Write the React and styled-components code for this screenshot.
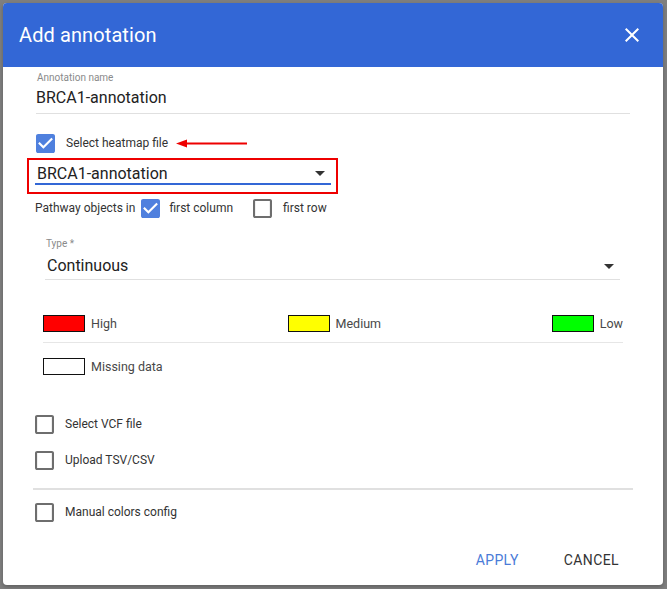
import React from "react";
import styled, { createGlobalStyle } from "styled-components";

const GlobalStyle = createGlobalStyle`
  html, body {
    margin: 0;
    padding: 0;
    background: #808080;
    font-family: Roboto, "Liberation Sans", Arial, sans-serif;
  }
  * { box-sizing: border-box; }
`;

const Page = styled.div`
  width: 667px;
  height: 589px;
  padding: 3px 4px 4px 3px;
  background: #7f7f7f;
`;

const Dialog = styled.div`
  width: 660px;
  height: 582px;
  background: #fff;
  border-radius: 4px;
  overflow: hidden;
  display: flex;
  flex-direction: column;
  box-shadow: 0 2px 4px rgba(0, 0, 0, 0.25);
`;

const Header = styled.div`
  height: 64px;
  flex: none;
  background: #3367d6;
  color: #fff;
  display: flex;
  align-items: center;
  justify-content: space-between;
  padding: 0 19px 0 16px;
`;

const Title = styled.h2`
  margin: 0;
  font-size: 20px;
  font-weight: 400;
  letter-spacing: 0.1px;
`;

const CloseButton = styled.button`
  border: 0;
  background: none;
  padding: 0;
  width: 24px;
  height: 24px;
  color: #fff;
  display: flex;
`;

const Body = styled.div`
  flex: 1;
  display: flex;
  flex-direction: column;
  padding: 0 30px 0 24px;
`;

const Field = styled.div`
  display: flex;
  flex-direction: column;
  margin: ${(p) => p.$margin};
  border-bottom: 1px solid #e0e0e0;
  padding-bottom: ${(p) => p.$pb || 3}px;
`;

const FieldLabel = styled.label`
  font-size: 10px;
  line-height: 12px;
  color: #8a8a8a;
  padding-left: 1px;
  margin-bottom: ${(p) => p.$gap || 4}px;
`;

const FieldValue = styled.div`
  display: flex;
  align-items: center;
  justify-content: space-between;
  padding: 0 ${(p) => p.$pr || 0}px 0 ${(p) => p.$pl || 0}px;
  font-size: 16px;
  line-height: 20px;
  color: #222;
`;

const CheckRow = styled.div`
  display: flex;
  align-items: center;
  height: 24px;
  margin-top: ${(p) => p.$mt || 0}px;
  padding-left: ${(p) => p.$pl ?? 8}px;
  font-size: 12px;
  color: #333;
`;

const CheckText = styled.span`
  margin-left: ${(p) => p.$ml ?? 11}px;
  margin-right: ${(p) => p.$mr || 0}px;
`;

const BoxIcon = styled.svg`
  flex: none;
  display: block;
`;

const Arrow = styled.svg`
  margin-left: 8px;
  display: block;
`;

const Highlight = styled.div`
  width: 311px;
  height: 36px;
  margin-top: 3px;
  border: 2px solid #ee0000;
  padding: 1px 5px 0 6px;
`;

const Select = styled.div`
  display: flex;
  align-items: center;
  justify-content: space-between;
  height: 24px;
  padding: 2px 6px 0 2px;
  border-bottom: 2px solid #3367d6;
  font-size: 16px;
  color: #222;
`;

const Legend = styled.div`
  display: flex;
  flex-direction: column;
  margin: 35px 10px 0 16px;
`;

const LegendRow = styled.div`
  display: flex;
  justify-content: space-between;
  align-items: center;
  margin-top: ${(p) => p.$mt || 0}px;
  padding-bottom: ${(p) => p.$pb || 0}px;
  border-bottom: ${(p) => (p.$divider ? "1px solid #e6e6e6" : "0")};
`;

const LegendItem = styled.div`
  display: flex;
  align-items: center;
  font-size: 12.5px;
  color: #484848;
`;

const Swatch = styled.span`
  width: 42px;
  height: 17px;
  border: 1px solid #111;
  background: ${(p) => p.$color};
  margin-right: 6px;
`;

const Divider = styled.div`
  height: 2px;
  background: #e0e0e0;
  margin: 16px 0 0 6px;
`;

const Footer = styled.div`
  flex: none;
  display: flex;
  justify-content: flex-end;
  gap: 29px;
  padding: 0 36px 7px 0;
`;

const TextButton = styled.button`
  border: 0;
  background: none;
  height: 36px;
  padding: 0 8px;
  font-family: inherit;
  font-size: 14px;
  letter-spacing: 0.4px;
  color: ${(p) => (p.$primary ? "#4a7bd8" : "#333")};
`;

const Checkbox = ({ checked }) => (
  <BoxIcon width="19" height="19" viewBox="3 3 18 18">
    {checked ? (
      <path
        fill="#4f80de"
        d="M19 3H5c-1.11 0-2 .9-2 2v14c0 1.1.89 2 2 2h14c1.11 0 2-.9 2-2V5c0-1.1-.89-2-2-2zm-9 14l-5-5 1.41-1.41L10 14.17l7.59-7.59L19 8l-9 9z"
      />
    ) : (
      <path
        fill="#6e6e6e"
        d="M19 5v14H5V5h14m0-2H5c-1.1 0-2 .9-2 2v14c0 1.1.9 2 2 2h14c1.1 0 2-.9 2-2V5c0-1.1-.9-2-2-2z"
      />
    )}
  </BoxIcon>
);

const DropArrow = () => (
  <svg width="10" height="5" viewBox="7 10 10 5">
    <path d="M7 10l5 5 5-5z" fill="#333" />
  </svg>
);

const legend = [
  { color: "#ff0000", label: "High" },
  { color: "#ffff00", label: "Medium" },
  { color: "#00ff00", label: "Low" },
];

export default function App() {
  return (
    <Page>
      <GlobalStyle />
      <Dialog>
        <Header>
          <Title>Add annotation</Title>
          <CloseButton>
            <svg width="24" height="24" viewBox="0 0 24 24">
              <path
                fill="currentColor"
                d="M19 6.41L17.59 5 12 10.59 6.41 5 5 6.41 10.59 12 5 17.59 6.41 19 12 13.41 17.59 19 19 17.59 13.41 12z"
              />
            </svg>
          </CloseButton>
        </Header>

        <Body>
          <Field $margin="5px 3px 0 9px" $pb={5}>
            <FieldLabel>Annotation name</FieldLabel>
            <FieldValue>BRCA1-annotation</FieldValue>
          </Field>

          <CheckRow $mt={17} $pl={9}>
            <Checkbox checked />
            <CheckText>Select heatmap file</CheckText>
            <Arrow width="71" height="9" viewBox="0 0 71 9">
              <path d="M0 4.5 L11 0.5 L11 8.5 Z" fill="#ee0000" />
              <rect x="10" y="3.5" width="61" height="2" fill="#ee0000" />
            </Arrow>
          </CheckRow>

          <Highlight>
            <Select>
              <span>BRCA1-annotation</span>
              <DropArrow />
            </Select>
          </Highlight>

          <CheckRow $mt={2} $pl={8}>
            <span>Pathway objects in</span>
            <CheckText $ml={6} $mr={0} />
            <Checkbox checked />
            <CheckText $ml={9} $mr={20}>first column</CheckText>
            <Checkbox />
            <CheckText $ml={11}>first row</CheckText>
          </CheckRow>

          <Field $margin="18px 13px 0 18px" $pb={3}>
            <FieldLabel $gap={6}>Type *</FieldLabel>
            <FieldValue $pl={2} $pr={6}>
              <span>Continuous</span>
              <DropArrow />
            </FieldValue>
          </Field>

          <Legend>
            <LegendRow $divider $pb={10}>
              {legend.map((l) => (
                <LegendItem key={l.label}>
                  <Swatch $color={l.color} />
                  {l.label}
                </LegendItem>
              ))}
            </LegendRow>
            <LegendRow $mt={15}>
              <LegendItem>
                <Swatch $color="#fff" />
                Missing data
              </LegendItem>
            </LegendRow>
          </Legend>

          <CheckRow $mt={37}>
            <Checkbox />
            <CheckText>Select VCF file</CheckText>
          </CheckRow>
          <CheckRow $mt={12}>
            <Checkbox />
            <CheckText>Upload TSV/CSV</CheckText>
          </CheckRow>

          <Divider />

          <CheckRow $mt={10}>
            <Checkbox />
            <CheckText>Manual colors config</CheckText>
          </CheckRow>
        </Body>

        <Footer>
          <TextButton $primary>APPLY</TextButton>
          <TextButton>CANCEL</TextButton>
        </Footer>
      </Dialog>
    </Page>
  );
}
